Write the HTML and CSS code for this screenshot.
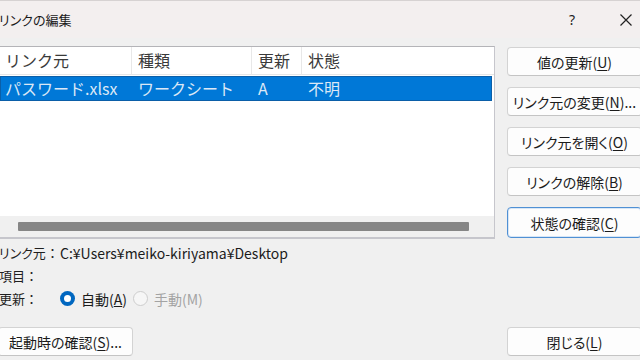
FILE: index.html
```html
<!DOCTYPE html>
<html lang="ja">
<head>
<meta charset="utf-8">
<title>リンクの編集</title>
<link rel="stylesheet" href="styles.css">
</head>
<body>
<div class="dialog">
  <div class="titlebar">
    <span class="title">リンクの編集</span>
    <span class="tb-actions">
      <span class="help">?</span>
      <svg class="close" width="14" height="14" viewBox="0 0 14 14"><path d="M1.5 1.5 L12.5 12.5 M12.5 1.5 L1.5 12.5" stroke="#222" stroke-width="1.2" fill="none"/></svg>
    </span>
  </div>
  <div class="content">
    <div class="main">
      <div class="listbox">
        <div class="list-body">
          <div class="header">
            <div class="cell c1">リンク元</div>
            <div class="cell c2">種類</div>
            <div class="cell c3">更新</div>
            <div class="cell c4">状態</div>
          </div>
          <div class="row selected">
            <div class="cell c1">パスワード.xlsx</div>
            <div class="cell c2">ワークシート</div>
            <div class="cell c3">A</div>
            <div class="cell c4">不明</div>
          </div>
        </div>
        <div class="hscroll"><div class="thumb"></div></div>
      </div>
      <div class="buttons">
        <div class="btn">値の更新(<u>U</u>)</div>
        <div class="btn">リンク元の変更(<u>N</u>)...</div>
        <div class="btn">リンク元を開く(<u>O</u>)</div>
        <div class="btn">リンクの解除(<u>B</u>)</div>
        <div class="btn focused">状態の確認(<u>C</u>)</div>
      </div>
    </div>
    <div class="info">
      <div class="label">リンク元<span class="colon">：</span></div>
      <div class="value">C:¥Users¥meiko-kiriyama¥Desktop</div>
      <div class="label">項目<span class="colon">：</span></div>
      <div class="value"></div>
      <div class="label">更新<span class="colon">：</span></div>
      <div class="value radios">
        <span class="radio checked"></span><span class="rtext">自動(<u>A</u>)</span>
        <span class="radio disabled"></span><span class="rtext dis">手動(M)</span>
      </div>
    </div>
    <div class="bottom">
      <div class="btn">起動時の確認(<u>S</u>)...</div>
      <div class="btn">閉じる(<u>L</u>)</div>
    </div>
  </div>
</div>
</body>
</html>
```

FILE: styles.css
```css
html, body {
  margin: 0;
  padding: 0;
  width: 640px;
  height: 360px;
  overflow: hidden;
  background: #f0f0f0;
}
body {
  font-family: "Noto Sans CJK JP", sans-serif;
  color: #1b1b1b;
}
.dialog {
  width: 666px;
  height: 360px;
  margin-left: -12px;
  display: flex;
  flex-direction: column;
  background: #f0f0f0;
}
.titlebar {
  height: 37px;
  border-top: 1px solid #d6d2d2;
  background: #f3efef;
  display: flex;
  align-items: center;
  justify-content: space-between;
  padding-left: 11px;
  font-size: 13px;
  font-feature-settings: "palt";
}
.title {
  color: #1a1a1a;
  margin-top: -1px;
}
.tb-actions {
  display: flex;
  align-items: center;
  gap: 44px;
  margin-right: 21px;
}
.help {
  font-size: 14px;
  font-family: "Noto Sans", sans-serif;
  color: #222;
}
.content {
  padding: 8px 0 0 10px;
  display: flex;
  flex-direction: column;
}
.main {
  display: flex;
  gap: 12px;
}
.listbox {
  width: 495px;
  height: 190px;
  border: 1px solid #b4b4b8;
  border-right-color: #c6c6cc;
  border-bottom: 2px solid #c6c6cc;
  background: #ffffff;
  display: flex;
  flex-direction: column;
}
.list-body {
  flex: 1;
}
.header, .row {
  display: flex;
  font-size: 16px;
}
.header {
  height: 27px;
  border-bottom: 1px solid #e6e6e6;
  color: #3a3a3a;
  align-items: center;
}
.header .cell {
  border-right: 1px solid #e8e8e8;
  height: 27px;
  line-height: 27px;
}
.header .c4 { border-right: none; }
.cell {
  padding-left: 6px;
  box-sizing: border-box;
  white-space: nowrap;
}
.c1 { width: 133px; }
.c2 { width: 120px; }
.c3 { width: 50px; }
.c4 { flex: 1; }
.row {
  height: 25px;
  line-height: 24px;
  margin: 1px 2px 0 1px;
}
.row .c1 { width: 132px; padding-left: 5px; }
.selected {
  background: #0078d7;
  box-shadow: inset 0 0 0 1px #0b5fa8;
  color: #dce8f6;
}
.hscroll {
  height: 21px;
  background: #f0f0f0;
  display: flex;
  align-items: center;
  padding-left: 19px;
}
.thumb {
  width: 451px;
  height: 9px;
  background: #868686;
  border-radius: 1px;
}
.buttons {
  display: flex;
  flex-direction: column;
  gap: 11px;
  padding-top: 1px;
}
.btn {
  width: 135px;
  height: 29px;
  box-sizing: border-box;
  border: 1px solid #d3d3d3;
  border-bottom-color: #c4c4c4;
  border-radius: 4px;
  background: #fdfdfd;
  display: flex;
  align-items: center;
  justify-content: center;
  font-size: 14px;
  font-feature-settings: "palt";
  color: #1b1b1b;
}
.btn u {
  text-decoration-thickness: 1px;
  text-underline-offset: 2px;
}
.focused {
  height: 31px;
  border: 1px solid #4f90d4;
  box-shadow: inset 0 0 0 1px #d7e6f6;
}
.info {
  margin-top: 2px;
  display: grid;
  grid-template-columns: 62px 1fr;
  grid-auto-rows: 23px;
  align-items: center;
  font-size: 14px;
  font-feature-settings: "palt";
}
.label {
  color: #1f1f1f;
  white-space: nowrap;
  font-size: 13px;
  padding-left: 1px;
}
.colon {
  font-feature-settings: normal;
}
.value {
  color: #1b1b1b;
  white-space: nowrap;
}
.radios {
  display: flex;
  align-items: center;
}
.radio {
  width: 15px;
  height: 15px;
  border-radius: 50%;
  box-sizing: border-box;
  display: inline-block;
}
.radio.checked {
  background: #0067c0;
  position: relative;
}
.radio.checked::after {
  content: "";
  position: absolute;
  left: 4px;
  top: 4px;
  width: 7px;
  height: 7px;
  border-radius: 50%;
  background: #ffffff;
}
.radio.disabled {
  border: 1px solid #cdcdcd;
  background: #f6f6f6;
  margin-left: 6px;
}
.rtext {
  margin-left: 6px;
}
.rtext.dis {
  color: #a3a3a3;
}
.bottom {
  margin-top: 17px;
  display: flex;
  justify-content: space-between;
  width: 644px;
}
```
